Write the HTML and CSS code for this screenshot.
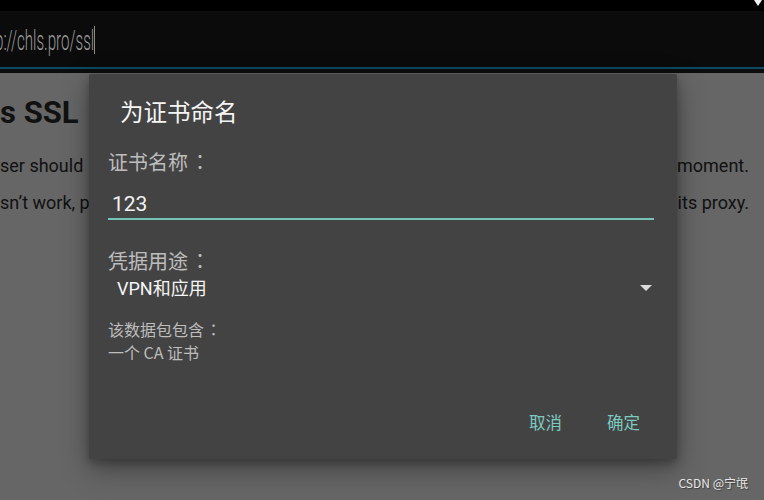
FILE: index.html
```html
<!DOCTYPE html>
<html lang="zh-CN">
<head>
<meta charset="utf-8">
<title>为证书命名</title>
<link rel="stylesheet" href="styles.css">
</head>
<body>
<div class="status"><span class="status-tri"></span></div>
<div class="urlbar">
  <span class="url">p://chls.pro/ssl</span><span class="cursor"></span>
</div>
<div class="urlline"></div>
<div class="urlgap"></div>
<main class="page">
  <div class="row heading"><span>s SSL</span></div>
  <div class="row para"><span>ser should</span><span>moment.</span></div>
  <div class="row para"><span>sn’t work, p</span><span>its proxy.</span></div>
</main>

<div class="dialog">
  <div class="title">为证书命名</div>
  <div class="label first">证书名称<span class="colon" lang="ja">：</span></div>
  <div class="input">123</div>
  <div class="label second">凭据用途<span class="colon" lang="ja">：</span></div>
  <div class="select"><span>VPN和应用</span><span class="caret"></span></div>
  <div class="info">该数据包包含<span class="colon" lang="ja">：</span><br>一个 CA 证书</div>
  <div class="actions"><span class="btn">取消</span><span class="btn">确定</span></div>
</div>

<div class="watermark">CSDN @宁氓</div>
</body>
</html>
```

FILE: styles.css
```css
html, body {
  margin: 0;
  padding: 0;
}
body {
  width: 764px;
  height: 500px;
  overflow: hidden;
  background: #666666;
  font-family: Roboto, "Noto Sans CJK SC", sans-serif;
  position: relative;
}
.status {
  height: 11px;
  background: #000;
  display: flex;
  justify-content: flex-end;
  padding-right: 2px;
}
.status-tri {
  width: 0;
  height: 0;
  border-left: 4px solid transparent;
  border-right: 4px solid transparent;
  border-top: 6px solid #f0f0f0;
}
.urlbar {
  height: 56px;
  background: #0b0b0b;
  display: flex;
  align-items: center;
  overflow: hidden;
}
.url {
  display: inline-block;
  font-size: 28px;
  font-weight: 300;
  color: #9a9a9a;
  margin-left: -5px;
  transform: scaleX(0.54);
  transform-origin: left center;
  white-space: nowrap;
  width: 99px;
  margin-top: 2px;
}
.cursor {
  width: 1px;
  height: 28px;
  background: #8a8a8a;
  margin-top: 2px;
}
.urlline {
  height: 2px;
  background: #0b4a62;
}
.urlgap {
  height: 4px;
  background: #0d0d0d;
}
.page {
  color: #111;
  padding: 0 15px 0 0;
}
.row {
  display: flex;
  justify-content: space-between;
  white-space: nowrap;
}
.heading {
  font-size: 31px;
  font-weight: 700;
  height: 40px;
  line-height: 40px;
  margin-top: 20px;
}
.para {
  font-size: 18px;
  height: 37px;
  line-height: 37px;
}
.heading + .para {
  margin-top: 14px;
}
.dialog {
  position: absolute;
  left: 89px;
  top: 74px;
  width: 588px;
  height: 385px;
  box-sizing: border-box;
  background: #434343;
  border-radius: 2px;
  box-shadow: 0 10px 28px rgba(0, 0, 0, 0.35), 0 4px 10px rgba(0, 0, 0, 0.25);
  padding: 22px 23px 25px 19px;
  display: flex;
  flex-direction: column;
  font-family: "Noto Sans CJK SC", Roboto, sans-serif;
}
.colon {
  font-family: "Noto Sans CJK JP", "Noto Sans CJK TC", sans-serif;
  display: inline-block;
  width: 1.2em;
  text-align: center;
}
.title {
  font-size: 23.5px;
  line-height: 30px;
  color: #f5f5f5;
  padding-left: 12px;
}
.label {
  font-size: 20px;
  line-height: 26px;
  color: #bdbdbd;
}
.label.first {
  margin-top: 23px;
}
.label.second {
  margin-top: 28px;
}
.input {
  margin-top: 15px;
  font-family: Roboto, "Noto Sans CJK SC", sans-serif;
  font-size: 21px;
  line-height: 28px;
  color: #f2f2f2;
  padding-left: 4px;
  border-bottom: 2px solid #77c3b9;
}
.select {
  margin-top: 3px;
  display: flex;
  align-items: center;
  justify-content: space-between;
  font-size: 18px;
  line-height: 24px;
  color: #f5f5f5;
  padding-left: 9px;
  padding-right: 2px;
}
.select span:first-child {
  font-family: Roboto, "Noto Sans CJK SC", sans-serif;
}
.caret {
  width: 0;
  height: 0;
  border-left: 6px solid transparent;
  border-right: 6px solid transparent;
  border-top: 6px solid #dcdcdc;
  margin-top: -2px;
}
.info {
  margin-top: 17px;
  font-size: 16px;
  line-height: 23px;
  color: #bdbdbd;
}
.actions {
  margin-top: auto;
  display: flex;
  justify-content: flex-end;
  gap: 45px;
  padding-right: 14px;
}
.btn {
  font-size: 16.5px;
  line-height: 24px;
  color: #7ccbc1;
}
.watermark {
  position: absolute;
  right: 16px;
  bottom: 9px;
  font-family: "Noto Sans CJK SC", sans-serif;
  font-size: 12px;
  color: #e8e8e8;
  text-shadow: 1px 1px 1px rgba(0, 0, 0, 0.4);
}
```
